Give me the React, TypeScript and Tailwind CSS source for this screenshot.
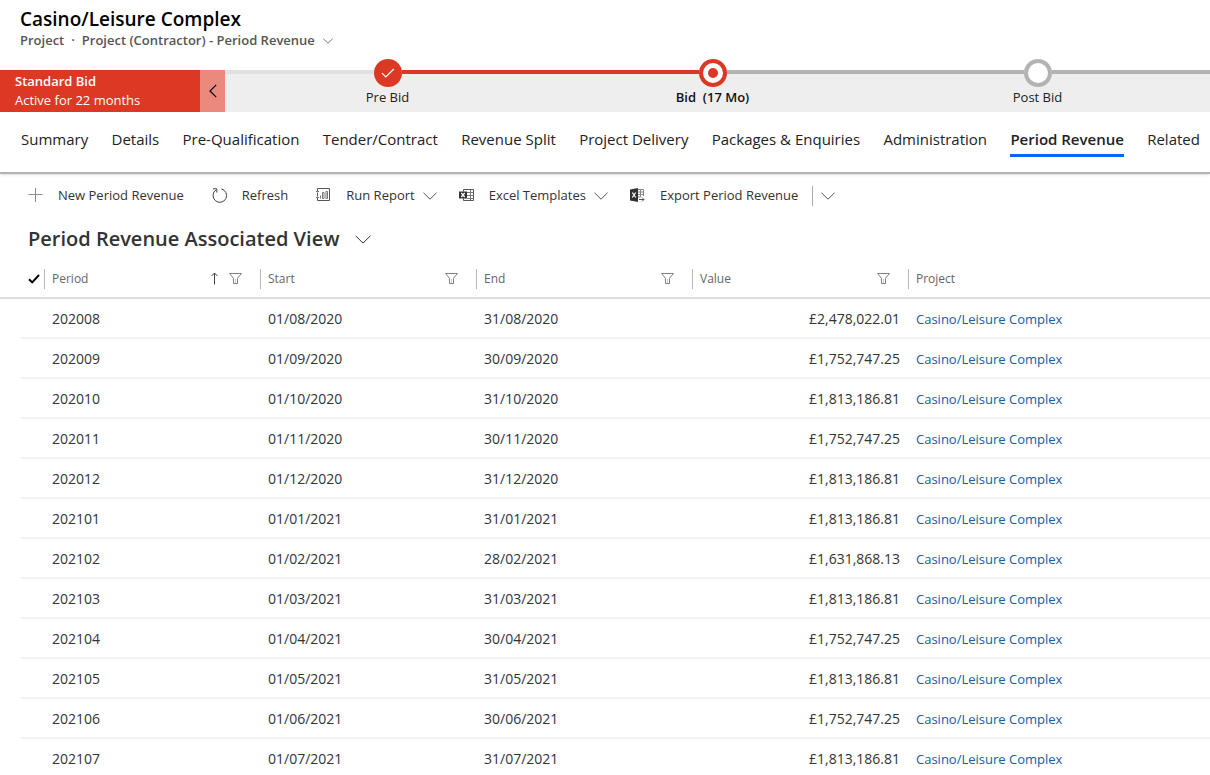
import React from 'react';

const tabs = [
  'Summary',
  'Details',
  'Pre-Qualification',
  'Tender/Contract',
  'Revenue Split',
  'Project Delivery',
  'Packages & Enquiries',
  'Administration',
  'Period Revenue',
  'Related',
];

const rows = [
  { period: '202008', start: '01/08/2020', end: '31/08/2020', value: '£2,478,022.01' },
  { period: '202009', start: '01/09/2020', end: '30/09/2020', value: '£1,752,747.25' },
  { period: '202010', start: '01/10/2020', end: '31/10/2020', value: '£1,813,186.81' },
  { period: '202011', start: '01/11/2020', end: '30/11/2020', value: '£1,752,747.25' },
  { period: '202012', start: '01/12/2020', end: '31/12/2020', value: '£1,813,186.81' },
  { period: '202101', start: '01/01/2021', end: '31/01/2021', value: '£1,813,186.81' },
  { period: '202102', start: '01/02/2021', end: '28/02/2021', value: '£1,631,868.13' },
  { period: '202103', start: '01/03/2021', end: '31/03/2021', value: '£1,813,186.81' },
  { period: '202104', start: '01/04/2021', end: '30/04/2021', value: '£1,752,747.25' },
  { period: '202105', start: '01/05/2021', end: '31/05/2021', value: '£1,813,186.81' },
  { period: '202106', start: '01/06/2021', end: '30/06/2021', value: '£1,752,747.25' },
  { period: '202107', start: '01/07/2021', end: '31/07/2021', value: '£1,813,186.81' },
];

function Chevron({ className }: { className: string }) {
  return (
    <svg viewBox="0 0 14 8" className={className} fill="none" stroke="currentColor" aria-hidden="true">
      <path d="M.5 .8 7 7.2 13.5 .8" vectorEffect="non-scaling-stroke" />
    </svg>
  );
}

function FilterIcon() {
  return (
    <svg width="13" height="11" viewBox="0 0 13 11" fill="none" stroke="#808080" aria-hidden="true">
      <path d="M.6 .5H12.4L8.5 5.3V10.5H4.5V5.3Z" />
      <path d="M6.5 6V10" strokeOpacity=".4" />
    </svg>
  );
}

function PlusIcon() {
  return (
    <svg width="16" height="16" viewBox="0 0 16 16" stroke="#8a8a8a" aria-hidden="true">
      <path d="M7.5 0V14M.5 6.5H14.5" />
    </svg>
  );
}

function RefreshIcon() {
  return (
    <svg width="16" height="16" viewBox="0 0 16 16" fill="none" stroke="#444" aria-hidden="true">
      <path d="M9.3 .9A6.8 6.8 0 1 1 4 1.9" />
      <path d="M1 .8H4.8V4.6" />
    </svg>
  );
}

function ReportIcon() {
  return (
    <svg width="16" height="16" viewBox="0 0 16 16" fill="none" stroke="#555" aria-hidden="true">
      <path d="M1.5 3V.5H13.5V12.5H1.5V10M1.5 4.5V8.5" />
      <path d="M0 3.5H3M0 9.5H3" stroke="#777" />
      <path d="M4.5 7.5V10.5M6.5 10.5V4.5H8V10.5ZM10 10.5V3.5H11.5V10.5Z" stroke="#777" />
    </svg>
  );
}

function ExcelIcon() {
  return (
    <svg width="16" height="16" viewBox="0 0 16 16" fill="none" aria-hidden="true">
      <path d="M4.5 3.5V1.5H14.5V12.5H4.5V10.5" stroke="#555" />
      <path d="M8 4.5H14.5M8 7.5H14.5M8 10.5H14.5M11.5 1.5V12.5" stroke="#777" />
      <path d="M0 3.5H8V10.5H0Z" fill="#333" />
      <path d="M2.3 5 5.7 9M5.7 5 2.3 9" stroke="#fff" strokeWidth="1.2" />
    </svg>
  );
}

function ExportIcon() {
  return (
    <svg width="16" height="16" viewBox="0 0 16 16" fill="none" aria-hidden="true">
      <path d="M0 1.5 8 0V14L0 12.5Z" fill="#333" />
      <path d="M2.3 4.5 5.7 9.5M5.7 4.5 2.3 9.5" stroke="#fff" strokeWidth="1.2" />
      <path d="M8 1.5H13.5V8M8 4H13M8 6.5H13M8 9H10.5M10.5 1.5V9" stroke="#888" />
      <path d="M9 11.5H14M12 9.5 14 11.5 12 13.5" stroke="#555" />
    </svg>
  );
}

interface StageProps {
  label: string;
  status: 'done' | 'active' | 'open';
  before: string;
  after: string;
}

function Stage({ label, status, before, after }: StageProps) {
  return (
    <li className="flex-1 -mt-[11px]">
      <div className="flex">
        <div className={`mt-[11px] h-1 flex-1 ${before}`} />
        {status === 'done' && (
          <span className="flex h-7 w-7 items-center justify-center rounded-full bg-[#dc3824]">
            <svg width="14" height="10" viewBox="0 0 14 10" fill="none" stroke="#fff" strokeWidth="1.2" aria-hidden="true">
              <path d="M1 5.2 4.8 9 12.8 1" />
            </svg>
          </span>
        )}
        {status === 'active' && (
          <span className="flex h-7 w-7 items-center justify-center rounded-full border-4 border-[#dc3824] bg-white">
            <span className="h-2.5 w-2.5 rounded-full bg-[#dc3824]" />
          </span>
        )}
        {status === 'open' && <span className="h-7 w-7 rounded-full border-4 border-[#b3b3b3] bg-white" />}
        <div className={`mt-[11px] h-1 flex-1 ${after}`} />
      </div>
      <button
        className={`block w-full text-center text-[13px] leading-5 whitespace-pre ${
          status === 'active' ? 'font-semibold text-[#111]' : 'text-[#222]'
        }`}
      >
        {label}
      </button>
    </li>
  );
}

interface CommandProps {
  icon: React.ReactNode;
  label: string;
  menu?: boolean;
}

function Command({ icon, label, menu }: CommandProps) {
  return (
    <button className={`flex items-center gap-3.5 whitespace-nowrap ${menu ? 'mr-[22px]' : 'mr-7'}`}>
      {icon}
      <span className="flex items-center gap-2">
        {label}
        {menu && <Chevron className="h-2 w-3.5 text-[#555]" />}
      </span>
    </button>
  );
}

interface HeaderCellProps {
  label: string;
  sorted?: boolean;
  filter?: boolean;
}

function HeaderCell({ label, sorted, filter = true }: HeaderCellProps) {
  return (
    <th scope="col" className="p-0 font-normal">
      <div className="flex h-5 items-center border-l border-[#b5b5b5] pr-[18px] pl-[7px]">
        <span className="flex-1 text-left">{label}</span>
        {sorted && (
          <svg width="9" height="13" viewBox="0 0 9 13" fill="none" stroke="#444" className="mr-2.5" aria-hidden="true">
            <path d="M4.5 12.5V1M1.5 4 4.5 1 7.5 4" />
          </svg>
        )}
        {filter && (
          <button aria-label={`Filter by ${label}`}>
            <FilterIcon />
          </button>
        )}
      </div>
    </th>
  );
}

export default function App() {
  return (
    <div className="h-screen overflow-hidden bg-white font-['Open_Sans','Noto_Sans',sans-serif] text-[#333]">
      {/* Record header */}
      <header className="h-[70px] px-5 pt-[7px]">
        <h1 className="text-[19px] leading-6 font-semibold text-black">Casino/Leisure Complex</h1>
        <div className="flex items-center gap-[7px] text-[13px] leading-[19px] font-semibold text-[#555]">
          <span>Project</span>
          <span>·</span>
          <button className="flex items-center gap-2">
            Project (Contractor) - Period Revenue
            <Chevron className="h-1.5 w-2.5 text-[#777]" />
          </button>
        </div>
      </header>

      {/* Business process */}
      <section className="flex h-[42px]" aria-label="Business process">
        <div className="w-50 shrink-0 bg-[#dc3824] pt-0.5 pl-[15px] text-[13px] leading-[19px] text-white">
          <p className="font-semibold">Standard Bid</p>
          <p>Active for 22 months</p>
        </div>
        <button
          className="flex w-[25px] shrink-0 items-center justify-center bg-[#eb897d] text-black"
          aria-label="Previous stages"
        >
          <svg width="8" height="14" viewBox="0 0 8 14" fill="none" stroke="currentColor" strokeWidth="1.2" aria-hidden="true">
            <path d="M7.2 .8 1 7 7.2 13.2" />
          </svg>
        </button>
        <ol className="flex flex-1 bg-[#eee]">
          <Stage label="Pre Bid" status="done" before="bg-[#e1e1e1]" after="bg-[#dc3824]" />
          <Stage label="Bid  (17 Mo)" status="active" before="bg-[#dc3824]" after="bg-[#b3b3b3]" />
          <Stage label="Post Bid" status="open" before="bg-[#b3b3b3]" after="bg-[#b3b3b3]" />
          <li className="h-1 w-2.5 bg-[#b3b3b3]" aria-hidden="true" />
        </ol>
      </section>

      {/* Form tabs */}
      <nav className="flex h-[62px] justify-between border-b-2 border-[#b3b3b3] pt-4 pr-2.5 pl-[21px] text-[15px] text-[#222] shadow-sm">
        {tabs.map((tab) => (
          <button
            key={tab}
            className={`h-[29px] border-b-3 pb-1 leading-[22px] whitespace-nowrap ${
              tab === 'Period Revenue' ? 'border-[#0066ff] font-semibold' : 'border-transparent'
            }`}
          >
            {tab}
          </button>
        ))}
      </nav>

      {/* Commands */}
      <div className="flex h-11 items-center pl-7 text-[13px]">
        <Command icon={<PlusIcon />} label="New Period Revenue" />
        <Command icon={<RefreshIcon />} label="Refresh" />
        <Command icon={<ReportIcon />} label="Run Report" menu />
        <Command icon={<ExcelIcon />} label="Excel Templates" menu />
        <button className="flex items-center gap-3.5 whitespace-nowrap">
          <ExportIcon />
          Export Period Revenue
        </button>
        <button className="ml-3.5 flex h-5 items-center border-l border-[#aaa] pl-2" aria-label="More export options">
          <Chevron className="h-2 w-3.5 text-[#555]" />
        </button>
      </div>

      <h2 className="h-[42px] px-7 pt-1.5">
        <button className="flex items-center gap-4 text-xl leading-[30px] font-semibold">
          Period Revenue Associated View
          <Chevron className="h-[9px] w-4" />
        </button>
      </h2>

      <table className="w-full table-fixed border-collapse">
        <colgroup>
          <col className="w-5" />
          <col className="w-6" />
          <col className="w-[216px]" />
          <col className="w-[216px]" />
          <col className="w-[216px]" />
          <col className="w-[216px]" />
          <col />
        </colgroup>
        <thead className="text-xs text-[#666]">
          <tr className="h-[38px] border-b-2 border-[#dedede]">
            <th colSpan={2} className="p-0">
              <button className="ml-7 block text-black" aria-label="Select all">
                <svg width="12" height="10" viewBox="0 0 12 10" fill="none" stroke="currentColor" strokeWidth="2" aria-hidden="true">
                  <path d="M1 5.2 4.2 8.4 11 1" />
                </svg>
              </button>
            </th>
            <HeaderCell label="Period" sorted />
            <HeaderCell label="Start" />
            <HeaderCell label="End" />
            <HeaderCell label="Value" />
            <HeaderCell label="Project" filter={false} />
          </tr>
        </thead>
        <tbody className="text-sm [&_td]:border-b-2 [&_td]:border-[#f3f3f3] [&_td]:p-0 [&_td]:pt-0.5 [&_td]:pl-2">
          {rows.map((row) => (
            <tr key={row.period} className="h-10">
              <td className="border-none!" />
              <td />
              <td>{row.period}</td>
              <td>{row.start}</td>
              <td>{row.end}</td>
              <td className="pr-2! text-right">{row.value}</td>
              <td className="text-[13px]">
                <a href="#" className="text-[#115ea3]">
                  Casino/Leisure Complex
                </a>
              </td>
            </tr>
          ))}
        </tbody>
      </table>
    </div>
  );
}
